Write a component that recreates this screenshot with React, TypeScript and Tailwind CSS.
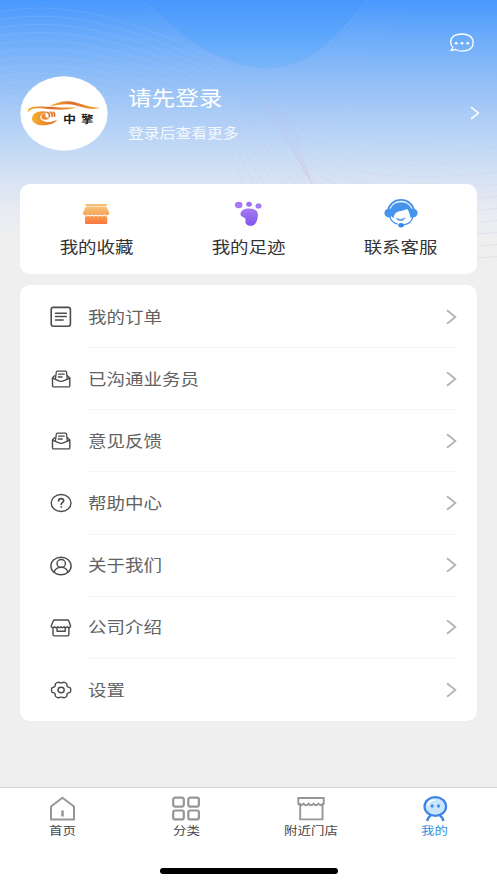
import React from 'react';

const Chevron = ({ className = '' }: { className?: string }) => (
  <svg viewBox="0 0 12 16" fill="none" stroke="currentColor" strokeWidth="1.8" className={className}>
    <path d="M2 1.2 10.4 8 2 14.8" />
  </svg>
);

const icon = {
  width: 24,
  height: 24,
  viewBox: '0 0 24 24',
  fill: 'none',
  stroke: '#4b4b4b',
  strokeWidth: 1.4,
  strokeLinejoin: 'round' as const,
  strokeLinecap: 'round' as const,
};

const OrderIcon = () => (
  <svg {...icon}>
    <rect x="2.2" y="2.4" width="19.2" height="18.8" rx="2.2" strokeWidth="1.6" />
    <path d="M6.5 8.3h10.8M6.5 11.6h10.8M6.500 15h7.6" strokeWidth="1.5" />
  </svg>
);

const MailIcon = () => (
  <svg {...icon}>
    <path d="M5.600 8.800 3.500 11v7.700a1.200 1.200 0 0 0 1.200 1.200h14.900a1.200 1.200 0 0 0 1.200-1.200V11l-2.300-2.200" />
    <path d="M3.500 11.200 9.300 13.700c1.800.9 3.900.9 5.700 0l5.800-2.500" />
    <path d="M6.400 12.200 7.300 5.100c.1-.7.400-1 1-1h8.200c.7 0 1 .4 1 1l.8 7.100M9.600 7.200h5.600M9.300 10h3.900" strokeWidth="1.3" />
  </svg>
);

const HelpIcon = () => (
  <svg {...icon}>
    <ellipse cx="12.1" cy="12" rx="9.900" ry="8.500" />
    <path d="M9.600 9.900c0-1.500 1-2.300 2.500-2.300s2.600.8 2.600 2.100c0 1.700-2.500 1.800-2.500 3.800M12.200 15.900v.3" strokeWidth="1.6" />
  </svg>
);

const UserIcon = () => (
  <svg {...icon}>
    <ellipse cx="12" cy="12" rx="10.100" ry="8.800" />
    <ellipse cx="12.200" cy="9.400" rx="4.200" ry="3.900" />
    <path d="M5.200 18.200c.8-3 3.300-4.800 6.900-4.800s6 1.800 6.800 4.800" />
  </svg>
);

const ShopIcon = () => (
  <svg {...icon}>
    <path d="M5.800 4h12.800a1.300 1.300 0 0 1 1.200.8l1.700 5v1c-1 1.200-2.200 1.200-3.200 0-1 1.200-2.200 1.200-3.200 0-1 1.200-2.200 1.200-3.200 0-1 1.200-2.200 1.200-3.200 0-1 1.200-2.200 1.200-3.200 0-1 1.200-2.200 1.200-3.200 0v-1l2.100-5a1.300 1.300 0 0 1 1.400-.8z" />
    <path d="M4 12v6.500c0 .9.500 1.400 1.300 1.400h13.300c.8 0 1.300-.5 1.300-1.400V12M8 12.500v2.800h8.200v-2.800" />
  </svg>
);

const GearIcon = () => (
  <svg {...icon}>
    <path d="M8.200 4.500c1.300-.8 1.900.4 3.900.4s2.600-1.200 3.900-.4l1.500 1c.8.7.1 1.900.9 3 .8 1 2.800.8 3.100 1.800.3 1.100.3 2.300 0 3.400-.3 1-2.300.8-3.100 1.800-.8 1.100-.1 2.300-.9 3l-1.500 1c-1.300.8-1.900-.4-3.900-.4s-2.600 1.200-3.900.4l-1.500-1c-.8-.7-.1-1.900-.9-3-.8-1-2.800-.8-3.100-1.800-.3-1.100-.3-2.300 0-3.400.3-1 2.300-.8 3.100-1.800.8-1.100.1-2.300.9-3z" />
    <ellipse cx="12.1" cy="12" rx="3.100" ry="2.700" />
  </svg>
);

const rows = [
  { label: '我的订单', Icon: OrderIcon },
  { label: '已沟通业务员', Icon: MailIcon },
  { label: '意见反馈', Icon: MailIcon },
  { label: '帮助中心', Icon: HelpIcon },
  { label: '关于我们', Icon: UserIcon },
  { label: '公司介绍', Icon: ShopIcon },
  { label: '设置', Icon: GearIcon },
];

const FavoriteIcon = () => (
  <svg width="34" height="32" viewBox="0 0 34 32">
    <defs>
      <linearGradient id="fav" x1="0" y1="0" x2="0" y2="1">
        <stop offset="0" stopColor="#f8c27b" />
        <stop offset="1" stopColor="#f4a157" />
      </linearGradient>
      <linearGradient id="favBox" x1="0" y1="0" x2="0" y2="1">
        <stop offset="0" stopColor="#f9a14f" />
        <stop offset="1" stopColor="#fb7540" />
      </linearGradient>
    </defs>
    <rect x="6.400" y="5.900" width="21.600" height="2" rx=".8" fill="#f6bd75" />
    <path d="M7.500 8.600h19.200c.5 0 .8.200 1 .6l2.500 5.400c.7 2.600-3.200 3.900-4.600 1.600-1 1.500-3.400 1.500-4.300 0-1 1.500-3.300 1.500-4.200 0-1 1.500-3.300 1.500-4.300 0-1 1.500-3.300 1.500-4.200 0-1.400 2.300-5.300 1-4.600-1.600l2.500-5.400c.2-.4.500-.6 1-.6z" fill="url(#fav)" />
    <path d="M6 18.400c1 .2 1.900-.2 2.700-1 1.300 1.300 2.900 1.300 4.200 0 1.300 1.300 2.900 1.300 4.200 0 1.300 1.300 2.900 1.300 4.200 0 1.300 1.300 2.900 1.300 4.200 0 .8.800 1.600 1.200 2.700 1v6.300c0 .9-.5 1.400-1.400 1.400H7.400c-.9 0-1.400-.5-1.400-1.400z" fill="url(#favBox)" />
  </svg>
);

const FootIcon = () => (
  <svg width="34" height="32" viewBox="0 0 34 32">
    <defs>
      <linearGradient id="foot" x1="0" y1="0" x2="0" y2="1">
        <stop offset="0" stopColor="#a67df3" />
        <stop offset="1" stopColor="#8052ed" />
      </linearGradient>
    </defs>
    <ellipse cx="7.700" cy="7" rx="3.800" ry="3.300" fill="#a57af2" />
    <ellipse cx="18" cy="6.200" rx="2.800" ry="2.500" fill="#9e70f1" />
    <ellipse cx="27.500" cy="7.900" rx="3" ry="2.600" fill="#a57af2" />
    <path d="M9.500 15.700c.4-3.500 4.500-5.400 9.200-5.200 4.800.2 8.300 2.300 8.200 6.300 0 2.800-.5 4.800-1.600 7.300-1.100 2.600-3.400 3.900-6.200 3.700-2.900-.2-4.900-1.800-4.700-4.400.1-1.200.4-2.100-.2-2.900-1.300-1.700-5-1.700-4.700-4.800z" fill="url(#foot)" />
  </svg>
);

const ServiceIcon = () => (
  <svg width="34" height="32" viewBox="0 0 34 32">
    <path d="M3.900 13C5 6.200 10.300 1.900 17 1.900S29 6.200 30.100 13" fill="none" stroke="#4594ed" strokeWidth="1.900" />
    <path d="M5.800 16C5.400 9 10.400 4.300 17 4.300S28.600 9 28.200 16l-1.900 4c-.3-3.800-1.100-6.700-3.200-9.100-3.300 2.100-7.200 1.300-10.400 3.300-2.200 1.400-2.900 3.500-3.200 6.200z" fill="#4594ed" />
    <path d="M4.200 10.800h3v8.700h-3c-5-.6-5-8.200 0-8.700zM29.800 10.800h-3v8.700h3c5-.6 5-8.200 0-8.700z" fill="#4594ed" />
    <path d="M12.300 20.300c2.500 1.500 6.500 1.500 8.900-.4-1.500 3.100-7 3.600-8.900.4z" fill="#4594ed" stroke="#4594ed" strokeWidth=".7" />
    <path d="M6 19.200c1 3.600 4 6.100 7.600 7M28.700 19.200c-.7 4.300-4.300 7-9.300 7.600" fill="none" stroke="#4594ed" strokeWidth="1.300" />
    <ellipse cx="17.100" cy="27.200" rx="2.800" ry="2.200" fill="#3888e8" />
  </svg>
);

const shortcuts = [
  { label: '我的收藏', Icon: FavoriteIcon },
  { label: '我的足迹', Icon: FootIcon },
  { label: '联系客服', Icon: ServiceIcon },
];

const navIcon = { width: 32, height: 28, viewBox: '0 0 32 28', fill: 'none', stroke: '#969696', strokeWidth: 2 };

const tabs = [
  {
    label: '首页',
    color: 'text-[#464646]',
    drawing: (
      <svg {...navIcon} strokeLinejoin="round">
        <path d="M5 11.500 16.400 2.800 28 11.500V24.500H5z" />
        <path d="M16.500 15.500v6" strokeWidth="2.500" />
      </svg>
    ),
  },
  {
    label: '分类',
    color: 'text-[#464646]',
    drawing: (
      <svg {...navIcon} strokeWidth="2.200">
        <rect x="3.200" y="2.700" width="10.600" height="8.900" rx="2" />
        <rect x="18.300" y="2.700" width="10.600" height="8.900" rx="2" />
        <rect x="3.200" y="15.500" width="10.600" height="8.900" rx="2" />
        <rect x="18.300" y="15.500" width="10.600" height="8.900" rx="2" />
      </svg>
    ),
  },
  {
    label: '附近门店',
    color: 'text-[#464646]',
    drawing: (
      <svg {...navIcon}>
        <path d="M3.300 9.500V3h25.400v6.500M5.200 8v16.400h22.300V8M3.300 9.300c1.800 1.200 3.800 1.200 5.300-.6 1.700 2 3.500 2 4.900 0 1.600 2 3.400 2 4.900 0 1.600 2 3.400 2 4.900 0 1.500 1.800 3.400 1.800 5.400.6" strokeWidth="1.900" />
      </svg>
    ),
  },
  {
    label: '我的',
    color: 'text-[#398fe4]',
    drawing: (
      <svg {...navIcon} stroke="#3c84e8">
        <ellipse cx="16.300" cy="11.500" rx="10.800" ry="9.300" fill="#c9e5fb" strokeWidth="2.200" />
        <path d="M8.800 10.500c.6-3.500 3.400-5.400 7.200-5.400" stroke="#fff" strokeWidth="1.500" />
        <ellipse cx="13.100" cy="11" rx="1.500" ry="1.700" fill="#398bef" stroke="none" />
        <ellipse cx="19.500" cy="11" rx="1.500" ry="1.700" fill="#398bef" stroke="none" />
        <path d="M12 20.500c-2 .9-3.300 2.400-3.800 5.500M20.600 20.500c2 .9 3.300 2.400 3.800 5.500" strokeWidth="2.400" />
      </svg>
    ),
  },
];

const Backdrop = () => (
  <svg className="absolute inset-0 h-[270px] w-full" viewBox="0 0 497 270" fill="none">
    <defs>
      <linearGradient id="sky" x1="0" y1="0" x2="0" y2="240" gradientUnits="userSpaceOnUse">
        <stop offset="0" stopColor="#4898fe" />
        <stop offset=".13" stopColor="#66a9fb" />
        <stop offset=".28" stopColor="#86b9f8" />
        <stop offset=".46" stopColor="#a7caf6" />
        <stop offset=".62" stopColor="#c2d9f5" />
        <stop offset=".76" stopColor="#d9e4f3" />
        <stop offset=".88" stopColor="#e8ebf2" />
        <stop offset="1" stopColor="#efeff0" />
      </linearGradient>
      <linearGradient id="bowl" x1="0" y1="0" x2="0" y2="1">
        <stop offset="0" stopColor="#4797fe" />
        <stop offset=".5" stopColor="#5ca6fb" />
        <stop offset="1" stopColor="#7ab6f9" />
      </linearGradient>
    </defs>
    <rect width="497" height="270" fill="url(#sky)" />
    <path d="M140 0C165 15 180 38 210 53 236 66 256 69 270 69 310 67 336 38 368 0z" fill="url(#bowl)" />
    <g stroke="#c9b8e4" strokeWidth="1">
      {Array.from({ length: 15 }, (_, i) => (
        <path key={i} d={`M${225 + i * 5} ${70 + i * 4}C${260 + i * 4} ${100 + i * 9} 350 ${104 + i * 12} 500 ${88 + i * 12}`} opacity={0.06 + i * 0.016} />
      ))}
      {Array.from({ length: 8 }, (_, i) => (
        <path key={i} d={`M${210 + i * 14} ${165 - i * 3}C${250 + i * 9} 120 ${320 + i * 5} 65 ${366 + i * 7} 0`} opacity=".09" />
      ))}
      {Array.from({ length: 8 }, (_, i) => (
        <path key={i} d={`M${208 + i * 6} ${95 + i * 2}C${222 + i * 6} 130 ${232 + i * 8} 160 ${245 + i * 11} 188`} opacity=".2" />
      ))}
      <path d="M140 0C165 15 180 38 210 53 236 66 256 69 270 69 310 67 336 38 368 0" opacity=".15" />
    </g>
    <g stroke="#d1e4fb" strokeWidth="1" opacity=".13">
      {Array.from({ length: 20 }, (_, i) => (
        <path key={i} d={`M0 ${12 + i * 8}C70 ${-2 + i * 8.5} 140 ${22 + i * 8} 235 ${68 + i * 6}`} />
      ))}
    </g>
  </svg>
);

const Logo = () => (
  <svg className="h-[75px] w-[88px]" viewBox="0 0 88 75">
    <defs>
      <linearGradient id="gold" x1="0" y1="0" x2="1" y2="0">
        <stop offset="0" stopColor="#f5b52f" />
        <stop offset=".45" stopColor="#de6a2c" />
        <stop offset="1" stopColor="#f4ab32" />
      </linearGradient>
      <linearGradient id="hand" x1="0" y1="0" x2="1" y2="0">
        <stop offset="0" stopColor="#f6b22e" />
        <stop offset="1" stopColor="#e0692b" />
      </linearGradient>
    </defs>
    <ellipse cx="44" cy="37.500" rx="43.700" ry="37.200" fill="white" />
    <path d="M8.200 36.500C6.500 32.500 11 31 17 30.600 28 29.700 40 32.500 57 31.300 47 35 34 33.600 24 32.600 16 31.900 10.500 32.500 8.200 36.500z" fill="url(#gold)" />
    <path d="M29 30.400C37 26 46 23.800 55 26.300 64 28.700 70 31.700 80 31.600 74 34.600 66 32.300 57 29.700 46 26.600 37 29.600 29 30.400z" fill="url(#gold)" />
    <path d="M28 36C19 33.500 12 37 12 42.500 12 47.500 18 50 25 49.200 31 48.600 35.500 46.700 37 43.700 31 46.900 25.500 46.500 22 44.200 18.300 41.600 20 37.600 28 36z" fill="url(#hand)" />
    <path d="M26 37c-5 .6-6.500 5.200-2 6.600 2.300.6 4.500-.2 5.500-1.800-3.500.4-5.300-1.800-3.500-4.800z" fill="#ea8b31" />
    <path d="M27.300 36.500c1.800.6 2.500 2.200 1.900 4.300M30.300 36.100c1.700.8 2.200 2.300 1.600 4.400M33.200 36.200c1.400.8 1.800 2.200 1.200 4" fill="none" stroke="#df722d" strokeWidth="1.600" strokeLinecap="round" />
    <g fill="#202020" fontFamily="'Noto Sans CJK SC', sans-serif" fontWeight="700" fontSize="10.200">
      <text x="43" y="46.600" textLength="13" lengthAdjust="spacingAndGlyphs">中</text>
      <text x="61" y="46.600" textLength="12.500" lengthAdjust="spacingAndGlyphs">擎</text>
    </g>
  </svg>
);

export default function App() {
  return (
    <div className="relative flex h-[883px] w-full flex-col overflow-hidden bg-[#efeff0] [font-family:'Noto_Sans_CJK_SC','Noto_Sans',sans-serif]">
      <Backdrop />

      <header className="relative h-[184px] shrink-0">
        <div className="flex justify-end pt-[33px] pr-[22.500px]">
          <svg width="26" height="21" viewBox="0 0 26 21" fill="none" stroke="white" strokeWidth="1.300">
            <path d="M3.800 14.500C-.1 10 1.200 2.700 9 1.500c2.500-.6 5.700-.6 8 0 9.500 2.300 9.700 13.900 0 16.200-4 .9-7.500.4-10.500-1.200l-4.200.9z" />
            <g fill="white" stroke="none">
              <ellipse cx="7.200" cy="10.200" rx="1.400" ry="1.200" />
              <ellipse cx="13" cy="10.200" rx="1.400" ry="1.200" />
              <ellipse cx="18.800" cy="10.200" rx="1.400" ry="1.200" />
            </g>
          </svg>
        </div>
        <div className="mt-[21px] flex h-[76px] items-center pr-[17px] pl-5">
          <Logo />
          <div className="ml-[19.500px] flex flex-1 flex-col text-white">
            <span className="-mt-[2px] origin-left scale-x-[1.17] self-start text-[20.200px] leading-[30px]">请先登录</span>
            <span className="mt-[9px] origin-left scale-x-[1.17] self-start text-[13.500px] leading-5 text-white/85">登录后查看更多</span>
          </div>
          <Chevron className="h-[14px] w-[11px] text-white" />
        </div>
      </header>

      <main className="relative flex flex-1 flex-col px-5">
        <section className="grid h-[90px] shrink-0 grid-cols-3 rounded-[10px] bg-white">
          {shortcuts.map(({ label, Icon }) => (
            <div key={label} className="flex flex-col items-center pt-[14px]">
              <Icon />
              <span className="mt-[5px] scale-x-[1.17] text-[15.800px] leading-6 text-[#333]">{label}</span>
            </div>
          ))}
        </section>

        <section className="mt-[11px] flex h-[436px] shrink-0 flex-col rounded-[10px] bg-white pt-px pr-[20px] pl-[29px]">
          {rows.map(({ label, Icon }, i) => (
            <div key={label} className="flex flex-1 items-center">
              <Icon />
              <div className={`ml-[15px] flex h-full flex-1 items-center justify-between ${i < rows.length - 1 ? 'border-b border-[#f5f5f5]' : ''}`}>
                <span className="origin-left scale-x-[1.17] text-[15.800px] leading-6 text-[#626262]">{label}</span>
                <Chevron className="h-4 w-3 text-[#b4b4b4]" />
              </div>
            </div>
          ))}
        </section>
      </main>

      <nav className="relative flex h-[96px] shrink-0 flex-col items-center border-t border-[#d3d3d3] bg-white">
        <div className="grid w-full grid-cols-4 pt-[7px]">
          {tabs.map(({ label, color, drawing }) => (
            <div key={label} className={`flex flex-col items-center ${color}`}>
              {drawing}
              <span className="-mt-px scale-x-[1.17] text-[11.500px] leading-4">{label}</span>
            </div>
          ))}
        </div>
        <div className="mt-[30px] h-[6px] w-[178px] rounded-full bg-black" />
      </nav>
    </div>
  );
}
